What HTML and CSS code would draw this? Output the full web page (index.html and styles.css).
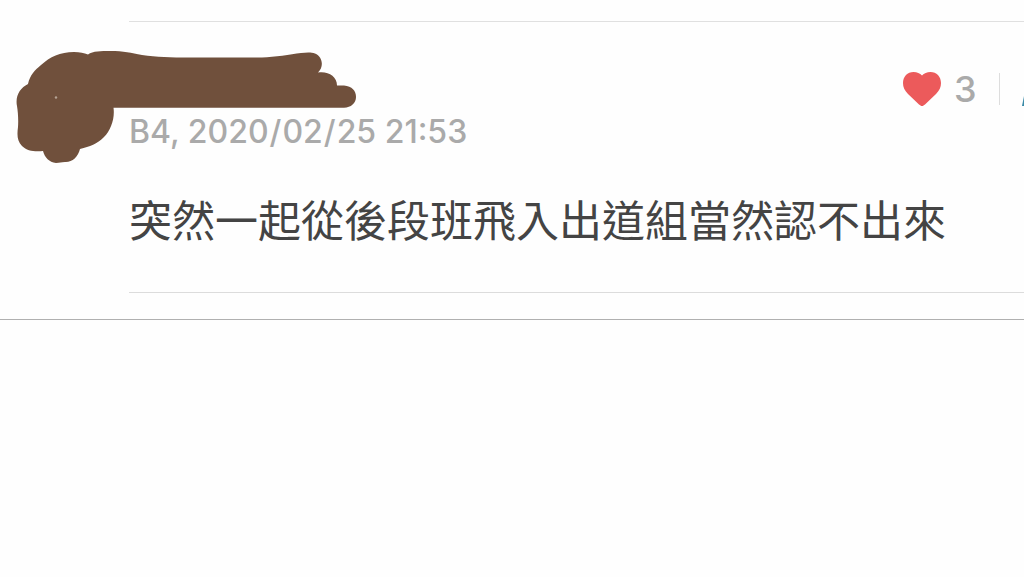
FILE: index.html
```html
<!DOCTYPE html>
<html lang="zh-Hant">
<head>
    <meta charset="UTF-8">
    <meta name="viewport" content="width=device-width, initial-scale=1.0">
    <title>B4</title>
    <link rel="stylesheet" href="styles.css">
</head>
<body>
    <div class="comments">
        <div class="comment">
            <div class="comment-header">
                <div class="meta">B4, 2020<span class="slash">/</span>02<span class="slash">/</span>25 21:53</div>
                <div class="actions">
                    <svg class="heart" viewBox="0 0 38 34">
                        <path fill="#ec5a5b" d="M19 34 C18 34 17 33.300 16 32.500 L5 22 C1.500 18.500 0 15 0 11 C0 4.500 4.500 0 10.500 0 C14 0 17 1.200 19 3.600 C21 1.200 24 0 27.500 0 C33.500 0 38 4.500 38 11 C38 15 36.500 18.500 33 22 L22 32.500 C21 33.300 20 34 19 34 Z"/>
                    </svg>
                    <span class="count">3</span>
                    <span class="divider"></span>
                    <svg class="reply" viewBox="0 0 2 10">
                        <path fill="#3b8ba8" d="M2 0 L2 10 L0 10 Z"/>
                    </svg>
                </div>
            </div>
            <p class="content">突然一起從後段班飛入出道組當然認不出來</p>
        </div>
    </div>

    <!-- marker over avatar and name -->
    <svg class="marker" viewBox="0 0 380 175">
        <path fill="#70503c" d="M28 84 C30 75 35 70 41 65 C50 57 60 52 74 52 C80 52 84 53 88 54.500 C93 51 101 51 110 51 C124 51 131 53 142 55 C157 57 170 57.500 190 57.500 L262 57.500 C275 57 290 54.500 301 53 C306 52.500 311 52 315 53.500 C323 57 324 67 318 72.500 C328 71 337 76 337 85.500 L344 85.500 C352 86 356 91 356 97 C356 103 351 107.700 344 107.700 L113.500 107.700 C115 118 111 130 104 137 C97 144 90 146.500 80 149 C78 157 72 162.500 65 162 C61 162 60 163 56 163 C49 162 45 158 43 151 C35 152 27 151 22 146 C17 141 17 135 18 127 C18.500 120 18 112 17 106 C15 96 20 88 28 84 Z"/>
        <circle cx="56" cy="97.500" r="1.200" fill="#b5a294"/>
    </svg>
</body>
</html>
```
FILE: styles.css
```css
body {
    margin: 0;
    padding: 0;
    background-color: #fefefe;
    font-family: Inter, "Noto Sans CJK TC", sans-serif;
    overflow: hidden;
}

.comments {
    box-sizing: border-box;
    height: 320px;
    padding: 21px 0 0 129px;
    border-bottom: 1px solid #b0b0b0;
}

.comment {
    box-sizing: border-box;
    height: 272px;
    border-top: 1px solid #e0e0e0;
    border-bottom: 1px solid #dcdcdc;
}

.comment-header {
    display: flex;
    justify-content: space-between;
    height: 130px;
}

.meta {
    padding-top: 90px;
    font-size: 32px;
    font-weight: 500;
    line-height: 40px;
    color: #aaaaaa;
    white-space: nowrap;
}

.slash {
    margin: 0 1px;
}

.actions {
    display: flex;
    align-items: center;
    height: 34px;
    padding-top: 50px;
}

.heart {
    width: 38px;
    height: 34px;
    margin-right: 13px;
}

.count {
    width: 23px;
    font-size: 36px;
    font-weight: 500;
    line-height: 34px;
    color: #aaaaaa;
}

.divider {
    width: 1px;
    height: 32px;
    margin-left: 22px;
    background-color: #dddddd;
}

.reply {
    width: 2px;
    height: 10px;
    margin-top: 23px;
    margin-left: 22px;
}

.content {
    margin: 34px 0 0;
    font-family: "Noto Sans CJK TC", sans-serif;
    font-size: 43px;
    line-height: 64px;
    color: #444444;
    white-space: nowrap;
}

.marker {
    position: absolute;
    top: 0;
    left: 0;
    width: 380px;
    height: 175px;
}
```
